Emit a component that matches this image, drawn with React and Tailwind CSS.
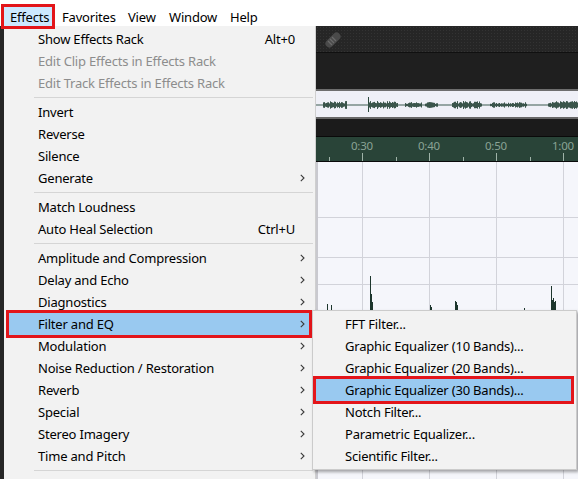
import React from "react";

function Chevron() {
  return (
    <svg width="5" height="8" viewBox="0 0 5 8" className="block">
      <path d="M0.8 0.8 L4 4 L0.8 7.2" fill="none" stroke="#3a3a3a" strokeWidth="1.1" />
    </svg>
  );
}

const mainItems = [
  { label: "Show Effects Rack", shortcut: "Alt+0" },
  { label: "Edit Clip Effects in Effects Rack", disabled: true },
  { label: "Edit Track Effects in Effects Rack", disabled: true },
  "sep",
  { label: "Invert" },
  { label: "Reverse" },
  { label: "Silence" },
  { label: "Generate", arrow: true },
  "sep",
  { label: "Match Loudness" },
  { label: "Auto Heal Selection", shortcut: "Ctrl+U" },
  "sep",
  { label: "Amplitude and Compression", arrow: true },
  { label: "Delay and Echo", arrow: true },
  { label: "Diagnostics", arrow: true },
  { label: "Filter and EQ", arrow: true, active: true },
  { label: "Modulation", arrow: true },
  { label: "Noise Reduction / Restoration", arrow: true },
  { label: "Reverb", arrow: true },
  { label: "Special", arrow: true },
  { label: "Stereo Imagery", arrow: true },
  { label: "Time and Pitch", arrow: true },
  "sep",
];

const subItems = [
  { label: "FFT Filter..." },
  { label: "Graphic Equalizer (10 Bands)..." },
  { label: "Graphic Equalizer (20 Bands)..." },
  { label: "Graphic Equalizer (30 Bands)...", active: true },
  { label: "Notch Filter..." },
  { label: "Parametric Equalizer..." },
  { label: "Scientific Filter..." },
];

function MainRow({ item }) {
  return (
    <div
      className={
        "relative ml-[5px] mr-[6px] flex h-[22px] items-center " +
        (item.active ? "z-10 bg-[#99c9f0] ring-[3px] ring-[#e3151a]" : "")
      }
    >
      <span className={"pl-[29px] " + (item.disabled ? "text-[#8d8d8d]" : "text-black")}>{item.label}</span>
      <span className="ml-auto text-black">{item.shortcut || ""}</span>
      <span className="flex w-[14px] items-center pl-[5px]">{item.arrow ? <Chevron /> : null}</span>
    </div>
  );
}

function Waveform() {
  const blobs = [
    [323, 347, 4],
    [368, 398, 4],
    [405, 422, 3],
    [425, 438, 3],
    [452, 482, 4],
    [490, 527, 3],
    [548, 578, 4],
  ];
  const bars = [];
  let seed = 7;
  const rnd = () => {
    seed = (seed * 9301 + 49297) % 233280;
    return seed / 233280;
  };
  blobs.forEach(([a, b, h], bi) => {
    for (let x = a; x < b; x += 1) {
      const hh = Math.max(0.6, h * (0.35 + 0.65 * rnd()));
      bars.push(<rect key={bi + "-" + x} x={x - 316} y={14 - hh} width="1" height={hh * 2} fill="#3a554b" />);
    }
  });
  return (
    <svg width="262" height="26" className="block">
      <rect x="0" y="13.5" width="262" height="1" fill="#3d5a51" />
      <rect x={368 - 316} y="6" width="1" height="15" fill="#2c4a3e" />
      {bars}
    </svg>
  );
}

function Spikes() {
  const s = [
    [9, 142],
    [13, 143],
    [52, 114],
    [53, 132],
    [54, 140],
    [112, 143],
    [113, 145],
    [137, 139],
    [138, 140],
    [139, 143],
    [206, 146],
    [233, 124],
    [234, 138],
    [235, 136],
    [236, 140],
    [237, 139],
  ];
  return (
    <svg width="262" height="317" className="absolute left-0 top-0">
      {s.map(([x, y], i) => (
        <rect key={i} x={x} y={y} width="1" height={160 - y} fill="#1d362d" />
      ))}
    </svg>
  );
}

export default function App() {
  const grid = [46, 113, 180, 247];
  return (
    <div className="relative h-[479px] w-[578px] overflow-hidden bg-[#232323] font-['Segoe_UI','Noto_Sans',sans-serif] text-[13px] leading-[22px] tracking-[-0.2px]">
      {/* Menu bar */}
      <div className="relative z-30 flex h-[26px] items-start bg-white pl-[4px] text-black">
        <div className="mt-[7px] flex h-[19px] w-[48px] items-center bg-[#cce8ff] pl-[6px] ring-[3px] ring-[#e3151a]">Effects</div>
        <div className="mt-[7px] flex h-[19px] w-[70px] items-center pl-[10px]">Favorites</div>
        <div className="mt-[7px] flex h-[19px] w-[41px] items-center pl-[6px]">View</div>
        <div className="mt-[7px] flex h-[19px] w-[61px] items-center pl-[6px]">Window</div>
        <div className="mt-[7px] flex h-[19px] w-[50px] items-center pl-[6px]">Help</div>
      </div>

      {/* Application content */}
      <div className="flex h-[453px]">
        <div className="w-[316px] bg-[#262626]" />
        <div className="flex w-[262px] flex-col">
          <div className="relative h-[26px] bg-[#262626] bg-[radial-gradient(#333_0.7px,transparent_0.8px)] bg-[length:3px_3px]">
            <svg width="22" height="22" viewBox="0 0 22 22" className="absolute left-[6px] top-[3px]">
              <rect x="7" y="2" width="8" height="18" rx="4" transform="rotate(45 11 11)" fill="#4a4a4a" />
              <path d="M6 12 L10 16 M8 10 L12 14 M10 8 L14 12" stroke="#6a6a6a" strokeWidth="1.2" />
            </svg>
          </div>
          <div className="h-[1px] bg-[#101010]" />
          <div className="h-[36px] bg-[#1f1f1f]" />
          <div className="h-[2px] bg-[#6e6e6e]" />
          <div className="h-[26px] bg-[#eff0f7]">
            <Waveform />
          </div>
          <div className="h-[2px] bg-[#686868]" />
          <div className="h-[17px] bg-[#1b1b1b]" />
          <div className="h-[1px] bg-[#0a0a0a]" />
          <div className="relative h-[24px] bg-[#294438]">
            {grid.map((x, i) => (
              <React.Fragment key={i}>
                <span
                  className="absolute top-[1px] w-[40px] text-center text-[11.5px] leading-[16px] text-[#8aa395]"
                  style={{ left: x - 20 }}
                >
                  {["0:30", "0:40", "0:50", "1:00"][i]}
                </span>
                <div className="absolute bottom-0 h-[8px] w-[1px] bg-[#9fb3a8]" style={{ left: x }} />
                <div className="absolute bottom-0 h-[4px] w-[1px] bg-[#9fb3a8]" style={{ left: x - 33 }} />
              </React.Fragment>
            ))}
          </div>
          <div className="h-[1px] bg-[#0a0a0a]" />
          <div className="relative flex-1 border-l-2 border-[#c9c9cf] bg-[#f5f6fb]">
            {grid.map((x, i) => (
              <div key={i} className="absolute top-0 h-full w-[1px] bg-[#d2d3da]" style={{ left: x - 2 }} />
            ))}
            {[55, 95, 122].map((y, i) => (
              <div key={i} className="absolute left-0 h-[1px] w-full bg-[#d2d3da]" style={{ top: y }} />
            ))}
            <Spikes />
          </div>
        </div>
      </div>

      {/* Main dropdown */}
      <div className="absolute left-[4px] top-[26px] z-20 h-[470px] w-[312px] border-r border-[#cfcfcf] bg-[#f2f2f2] pt-[2px]">
        {mainItems.map((item, i) =>
          item === "sep" ? (
            <div key={i} className="py-[3px] pl-[30px] pr-[2px]">
              <div className="h-[1px] bg-[#d5d5d5]" />
            </div>
          ) : (
            <MainRow key={i} item={item} />
          )
        )}
      </div>

      {/* Submenu */}
      <div className="absolute left-[312px] top-[310px] z-20 w-[265px] border border-[#cbcbcb] bg-[#f2f2f2] py-[2px] shadow-[2px_2px_3px_rgba(0,0,0,0.35)]">
        {subItems.map((item, i) => (
          <div
            key={i}
            className={
              "relative ml-[3px] mr-[5px] flex h-[22px] items-center pl-[29px] text-black " +
              (item.active ? "bg-[#99c9f0] ring-[3px] ring-[#e3151a]" : "")
            }
          >
            {item.label}
          </div>
        ))}
      </div>
    </div>
  );
}
